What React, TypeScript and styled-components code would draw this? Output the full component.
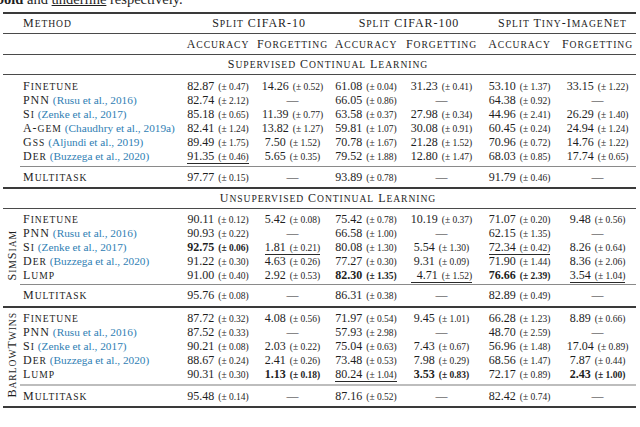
import React from 'react';
import styled, { createGlobalStyle, css } from 'styled-components';

const Global = createGlobalStyle`
  html, body { margin: 0; padding: 0; background: #ffffff; }
  body {
    overflow: hidden;
    font-family: "Liberation Serif", "Times New Roman", serif;
    color: #1e1e1e;
  }
`;

type RuleKind = 'heavy' | 'mid' | 'light' | 'faint';

const ruleCss: Record<RuleKind, string> = {
  heavy: '2px solid #3a3a3a',
  mid: '1px solid #4a4a4a',
  light: '1px solid #8a8a8a',
  faint: '2px solid #bdbdbd',
};

const Page = styled.div`
  width: 640px;
  padding-left: 3px;
  box-sizing: border-box;
`;

const Caption = styled.p`
  margin: -7px 0 0 -7px;
  height: 12px;
  font-size: 14.5px;
  line-height: 12px;
  white-space: nowrap;
`;

const Bold = styled.b`
  font-weight: 700;
`;

const Under = styled.span`
  text-decoration: underline;
`;

const Table = styled.table`
  margin-top: 7px;
  width: 633px;
  table-layout: fixed;
  border-collapse: separate;
  border-spacing: 0;
  border-top: ${ruleCss.heavy};
  border-bottom: ${ruleCss.heavy};
  font-size: 12px;
`;

const Col = styled.col<{ $w: number }>`
  width: ${(p) => p.$w}px;
`;

const Row = styled.tr<{ $rule?: RuleKind; $pt?: number; $pb?: number; $lh: number }>`
  & > td,
  & > th {
    border-top: ${(p) => (p.$rule ? ruleCss[p.$rule] : 'none')};
  }
  & > td {
    padding: ${(p) => p.$pt ?? 0}px 0 ${(p) => p.$pb ?? 0}px 0;
    height: ${(p) => p.$lh}px;
    line-height: ${(p) => p.$lh}px;
    vertical-align: middle;
    white-space: nowrap;
  }
`;

const Blank = styled.td``;

const LabelCell = styled.th`
  padding: 0;
  font-weight: 400;
  text-align: center;
  vertical-align: middle;
`;

const VLabel = styled.span`
  display: inline-block;
  writing-mode: vertical-rl;
  text-orientation: sideways;
  transform: rotate(180deg);
  font-size: 12px;
  line-height: 12px;
  white-space: nowrap;
`;

const MethodCell = styled.td`
  text-align: left;
  && {
    padding-left: 3px;
  }
`;

const GroupCell = styled.td`
  text-align: center;
  && {
    padding-left: 9px;
  }
`;

const HeadCell = styled.td`
  text-align: center;
`;

const TitleCell = styled.td`
  text-align: center;
`;

const ValueCell = styled.td`
  text-align: center;
`;

const Caps = styled.span`
  letter-spacing: 0.95px;
`;

const Low = styled.span`
  font-size: 0.8em;
  line-height: 1;
  text-transform: uppercase;
`;

const Cite = styled.span`
  color: #2f80b4;
  font-size: 11.3px;
  line-height: 1;
  margin-left: 3px;
`;

const Num = styled.span<{ $b?: boolean; $u?: boolean }>`
  font-weight: ${(p) => (p.$b ? 700 : 400)};
  ${(p) =>
    p.$u &&
    css`
      border-bottom: 1px solid #2a2a2a;
    `}
`;

const Pm = styled.span`
  font-size: 9.5px;
  line-height: 1;
  margin-left: 4px;
`;

const Phantom = styled.span`
  visibility: hidden;
`;

const Dash = styled.span`
  font-size: 12px;
`;

const SC = ({ t }: { t: string }) => (
  <Caps>
    {t.split(/([a-z]+)/).map((s, i) =>
      /^[a-z]+$/.test(s) ? <Low key={i}>{s}</Low> : <React.Fragment key={i}>{s}</React.Fragment>
    )}
  </Caps>
);

// value spec: "82.87|0.47", "b:..." bold, "u:..." underline, "l:" lead phantom, "-" dash
const Value = ({ spec }: { spec: string }) => {
  if (spec === '-') return <Dash>—</Dash>;
  let s = spec;
  let b = false;
  let u = false;
  let lead = false;
  while (/^[bul]:/.test(s)) {
    if (s[0] === 'b') b = true;
    if (s[0] === 'u') u = true;
    if (s[0] === 'l') lead = true;
    s = s.slice(2);
  }
  const [v, pm] = s.split('|');
  return (
    <Num $b={b} $u={u}>
      {lead && <Phantom>0</Phantom>}
      {v}
      <Pm>(±&nbsp;{pm})</Pm>
    </Num>
  );
};

type MethodRow = { name: string; cite?: string; vals: string[] };

const supervised: MethodRow[] = [
  { name: 'Finetune', vals: ['82.87|0.47', '14.26|0.52', '61.08|0.04', '31.23|0.41', '53.10|1.37', '33.15|1.22'] },
  { name: 'PNN', cite: 'Rusu et al., 2016', vals: ['82.74|2.12', '-', '66.05|0.86', '-', '64.38|0.92', '-'] },
  { name: 'Si', cite: 'Zenke et al., 2017', vals: ['85.18|0.65', '11.39|0.77', '63.58|0.37', '27.98|0.34', '44.96|2.41', '26.29|1.40'] },
  { name: 'A-gem', cite: 'Chaudhry et al., 2019a', vals: ['82.41|1.24', '13.82|1.27', '59.81|1.07', '30.08|0.91', '60.45|0.24', '24.94|1.24'] },
  { name: 'Gss', cite: 'Aljundi et al., 2019', vals: ['89.49|1.75', '7.50|1.52', '70.78|1.67', '21.28|1.52', '70.96|0.72', '14.76|1.22'] },
  { name: 'Der', cite: 'Buzzega et al., 2020', vals: ['u:91.35|0.46', '5.65|0.35', '79.52|1.88', '12.80|1.47', '68.03|0.85', '17.74|0.65'] },
];
const supervisedMulti = ['97.77|0.15', '-', '93.89|0.78', '-', '91.79|0.46', '-'];

const simsiam: MethodRow[] = [
  { name: 'Finetune', vals: ['90.11|0.12', '5.42|0.08', '75.42|0.78', '10.19|0.37', '71.07|0.20', '9.48|0.56'] },
  { name: 'PNN', cite: 'Rusu et al., 2016', vals: ['90.93|0.22', '-', '66.58|1.00', '-', '62.15|1.35', '-'] },
  { name: 'Si', cite: 'Zenke et al., 2017', vals: ['b:92.75|0.06', 'u:1.81|0.21', '80.08|1.30', '5.54|1.30', 'u:72.34|0.42', '8.26|0.64'] },
  { name: 'Der', cite: 'Buzzega et al., 2020', vals: ['91.22|0.30', '4.63|0.26', '77.27|0.30', '9.31|0.09', '71.90|1.44', '8.36|2.06'] },
  { name: 'Lump', vals: ['91.00|0.40', '2.92|0.53', 'b:82.30|1.35', 'u:l:4.71|1.52', 'b:76.66|2.39', 'u:3.54|1.04'] },
];
const simsiamMulti = ['95.76|0.08', '-', '86.31|0.38', '-', '82.89|0.49', '-'];

const barlow: MethodRow[] = [
  { name: 'Finetune', vals: ['87.72|0.32', '4.08|0.56', '71.97|0.54', '9.45|1.01', '66.28|1.23', '8.89|0.66'] },
  { name: 'PNN', cite: 'Rusu et al., 2016', vals: ['87.52|0.33', '-', '57.93|2.98', '-', '48.70|2.59', '-'] },
  { name: 'Si', cite: 'Zenke et al., 2017', vals: ['90.21|0.08', '2.03|0.22', '75.04|0.63', '7.43|0.67', '56.96|1.48', '17.04|0.89'] },
  { name: 'Der', cite: 'Buzzega et al., 2020', vals: ['88.67|0.24', '2.41|0.26', '73.48|0.53', '7.98|0.29', '68.56|1.47', '7.87|0.44'] },
  { name: 'Lump', vals: ['90.31|0.30', 'b:1.13|0.18', 'u:80.24|1.04', 'b:3.53|0.83', '72.17|0.89', 'b:2.43|1.00'] },
];
const barlowMulti = ['95.48|0.14', '-', '87.16|0.52', '-', '82.42|0.74', '-'];

type SectionProps = {
  rows: MethodRow[];
  multi: string[];
  label?: string;
  firstRule: RuleKind;
  pt: number;
  pb: number;
  multiRule: RuleKind;
  multiLh: number;
};

const Section = ({ rows, multi, label, firstRule, pt, pb, multiRule, multiLh }: SectionProps) => (
  <>
    {rows.map((r, i) => (
      <Row
        key={r.name}
        $rule={i === 0 ? firstRule : undefined}
        $pt={i === 0 ? pt : 0}
        $pb={i === rows.length - 1 ? pb : 0}
        $lh={14}
      >
        {i === 0 && (
          <LabelCell rowSpan={rows.length + 1}>
            {label && (
              <VLabel>
                <SC t={label} />
              </VLabel>
            )}
          </LabelCell>
        )}
        <MethodCell>
          <SC t={r.name} />
          {r.cite && <Cite>({r.cite})</Cite>}
        </MethodCell>
        {r.vals.map((v, j) => (
          <ValueCell key={j}>
            <Value spec={v} />
          </ValueCell>
        ))}
      </Row>
    ))}
    <Row $rule={multiRule} $lh={multiLh}>
      <MethodCell>
        <SC t="Multitask" />
      </MethodCell>
      {multi.map((v, j) => (
        <ValueCell key={j}>
          <Value spec={v} />
        </ValueCell>
      ))}
    </Row>
  </>
);

export default function App() {
  return (
    <Page>
      <Global />
      <Caption>
        <Bold>bold</Bold> and <Under>underline</Under> respectively.
      </Caption>
      <Table>
        <colgroup>
          <Col $w={17} />
          <Col $w={160} />
          <Col $w={76} />
          <Col $w={73} />
          <Col $w={74} />
          <Col $w={77} />
          <Col $w={79} />
          <Col $w={77} />
        </colgroup>
        <tbody>
          <Row $lh={19}>
            <Blank />
            <MethodCell>
              <SC t="Method" />
            </MethodCell>
            <GroupCell colSpan={2}>
              <SC t="Split CIFAR-10" />
            </GroupCell>
            <GroupCell colSpan={2}>
              <SC t="Split CIFAR-100" />
            </GroupCell>
            <GroupCell colSpan={2}>
              <SC t="Split Tiny-ImageNet" />
            </GroupCell>
          </Row>
          <Row $rule="mid" $lh={20}>
            <Blank />
            <Blank />
            {['Accuracy', 'Forgetting', 'Accuracy', 'Forgetting', 'Accuracy', 'Forgetting'].map((h, i) => (
              <HeadCell key={i}>
                <SC t={h} />
              </HeadCell>
            ))}
          </Row>
          <Row $rule="mid" $lh={19}>
            <Blank />
            <TitleCell colSpan={7}>
              <SC t="Supervised Continual Learning" />
            </TitleCell>
          </Row>
          <Section rows={supervised} multi={supervisedMulti} firstRule="mid" pt={4} pb={3} multiRule="light" multiLh={20} />
          <Row $rule="heavy" $lh={19}>
            <Blank />
            <TitleCell colSpan={7}>
              <SC t="Unsupervised Continual Learning" />
            </TitleCell>
          </Row>
          <Section rows={simsiam} multi={simsiamMulti} label="SimSiam" firstRule="mid" pt={3} pb={2} multiRule="light" multiLh={21} />
          <Section rows={barlow} multi={barlowMulti} label="BarlowTwins" firstRule="heavy" pt={3} pb={3} multiRule="faint" multiLh={20} />
        </tbody>
      </Table>
    </Page>
  );
}
